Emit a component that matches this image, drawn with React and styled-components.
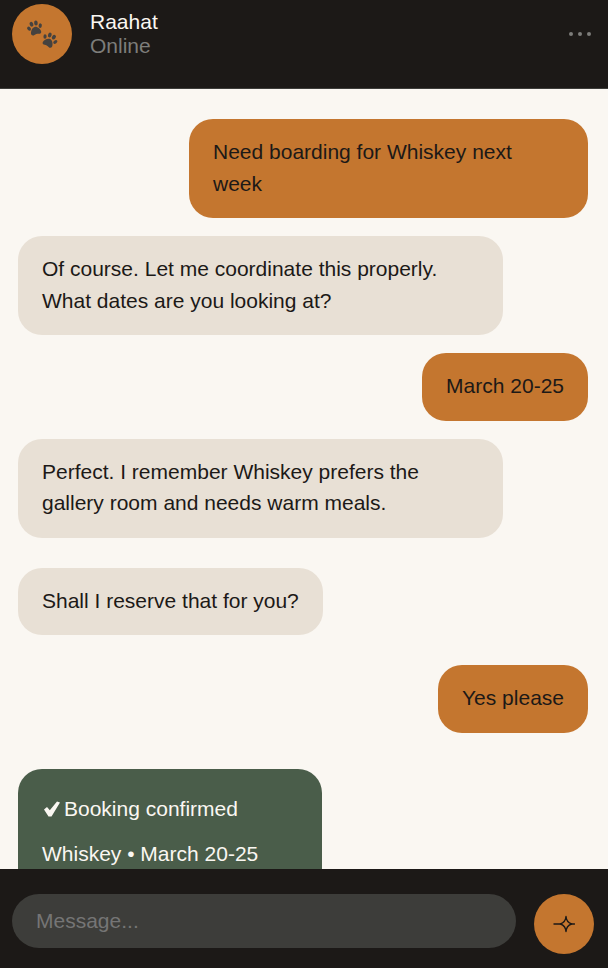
import React from 'react'
import styled, { createGlobalStyle } from 'styled-components'

const GlobalStyle = createGlobalStyle`
  html, body {
    margin: 0;
    padding: 0;
    height: 100%;
    overflow: hidden;
    background: #faf7f2;
    font-family: "Liberation Sans", Arial, sans-serif;
  }
  * { box-sizing: border-box; }
`

const messages = [
  { id: 1, from: 'user', text: 'Need boarding for Whiskey next week', gap: 0 },
  { id: 2, from: 'ai', text: 'Of course. Let me coordinate this properly. What dates are you looking at?', gap: 18 },
  { id: 3, from: 'user', text: 'March 20-25', gap: 18 },
  { id: 4, from: 'ai', text: 'Perfect. I remember Whiskey prefers the gallery room and needs warm meals.', gap: 18 },
  { id: 5, from: 'ai', text: 'Shall I reserve that for you?', gap: 30 },
  { id: 6, from: 'user', text: 'Yes please', gap: 30 },
]

function Paw({ x, y, rotate }) {
  return (
    <g transform={`translate(${x} ${y}) rotate(${rotate})`} fill="#45423f">
      <ellipse cx="-5.8" cy="-1.4" rx="1.6" ry="2.3" transform="rotate(-25 -5.8 -1.4)" />
      <ellipse cx="-2.3" cy="-5" rx="1.8" ry="2.5" transform="rotate(-8 -2.3 -5)" />
      <ellipse cx="2.3" cy="-5" rx="1.8" ry="2.5" transform="rotate(8 2.3 -5)" />
      <ellipse cx="5.8" cy="-1.4" rx="1.6" ry="2.3" transform="rotate(25 5.8 -1.4)" />
      <path d="M0 -1.6C2.8 -1.6 5.2 2.2 5.2 4.4C5.2 6.2 3.5 6.600 2.2 6.100C1 5.700 -1 5.700 -2.2 6.100C-3.500 6.600 -5.200 6.200 -5.200 4.400C-5.200 2.200 -2.800 -1.600 0 -1.600Z" />
    </g>
  )
}

export default function App() {
  return (
    <>
      <GlobalStyle />
      <Screen>
        <Header>
          <Avatar>
            <svg width="40" height="40" viewBox="0 0 40 40">
              <Paw x={13} y={14.5} rotate={-15} />
              <Paw x={27.5} y={26.5} rotate={28} />
            </svg>
          </Avatar>
          <Identity>
            <Name>Raahat</Name>
            <Status>Online</Status>
          </Identity>
          <MoreDots>
            <Dot />
            <Dot />
            <Dot />
          </MoreDots>
        </Header>
        <Messages>
          {messages.map((m) => (
            <Bubble key={m.id} $from={m.from} $gap={m.gap}>
              {m.text}
            </Bubble>
          ))}
          <Confirmation>
            <ConfirmTitle>
              <svg width="16" height="16" viewBox="0 0 16 16" fill="#faf7f2">
                <path d="M0 8.500L3 6L5.800 9.200L13 0.500L16 1.500L7.500 15.500L4.500 15.500Z" />
              </svg>
              Booking confirmed
            </ConfirmTitle>
            <ConfirmLine>Whiskey • March 20-25</ConfirmLine>
          </Confirmation>
        </Messages>
        <Composer>
          <MessageInput placeholder="Message..." />
          <SendButton aria-label="Send">
            <svg width="22" height="22" viewBox="0 0 22 22" fill="none" stroke="#1c1917" strokeWidth="1.4" strokeLinejoin="round" strokeLinecap="round">
              <path d="M13 3.500C13.300 7.500 14.500 9.500 18.500 11C14.500 12.500 13.300 14.500 13 18.500C12.700 14.500 11.500 12.500 7.500 11C11.500 9.500 12.700 7.500 13 3.500Z" />
              <path d="M1 11H7.500M18.500 11H21.500" />
            </svg>
          </SendButton>
        </Composer>
      </Screen>
    </>
  )
}

const Screen = styled.div`
  height: 968px;
  display: flex;
  flex-direction: column;
  overflow: hidden;
  background: #faf7f2;
`
const Header = styled.header`
  flex: none;
  height: 89px;
  padding: 4px 17px 0 12px;
  display: flex;
  align-items: flex-start;
  background: #1c1917;
  border-bottom: 1px solid #3d3d3a;
`
const Avatar = styled.div`
  width: 60px;
  height: 60px;
  border-radius: 50%;
  background: #c4762f;
  display: flex;
  align-items: center;
  justify-content: center;
`
const Identity = styled.div`
  margin-left: 18px;
  padding-top: 6px;
  flex: 1;
`
const Name = styled.div`
  font-size: 21px;
  line-height: 24px;
  color: #faf7f2;
`
const Status = styled.div`
  font-size: 21px;
  line-height: 24px;
  color: #7d7d7a;
`
const MoreDots = styled.div`
  display: flex;
  gap: 5px;
  margin-top: 28px;
`
const Dot = styled.span`
  width: 4px;
  height: 4px;
  border-radius: 50%;
  background: #7d7d7a;
`
const Messages = styled.main`
  flex: 1;
  min-height: 0;
  overflow: hidden;
  padding: 30px 20px 0 18px;
  display: flex;
  flex-direction: column;
  align-items: flex-start;
`
const Bubble = styled.div`
  flex: none;
  max-width: ${(p) => (p.$from === 'user' ? '399px' : '485px')};
  margin-top: ${(p) => p.$gap}px;
  align-self: ${(p) => (p.$from === 'user' ? 'flex-end' : 'flex-start')};
  padding: 17px 24px 19px;
  border-radius: 24px;
  font-size: 21px;
  line-height: 31.5px;
  color: #1c1917;
  background: ${(p) => (p.$from === 'user' ? '#c4762f' : '#e8e0d5')};
`
const Confirmation = styled.div`
  flex: none;
  width: 304px;
  margin-top: 36px;
  padding: 24px;
  border-radius: 24px;
  background: #4a5d4a;
  color: #faf7f2;
`
const ConfirmTitle = styled.div`
  display: flex;
  align-items: center;
  gap: 4px;
  padding-left: 2px;
  font-size: 21px;
  line-height: 32px;
  margin-bottom: 13px;
`
const ConfirmLine = styled.div`
  font-size: 21px;
  line-height: 32px;
`
const Composer = styled.footer`
  flex: none;
  height: 99px;
  padding: 25px 14px 0 12px;
  display: flex;
  align-items: flex-start;
  gap: 18px;
  background: #1c1917;
`
const MessageInput = styled.input`
  flex: 1;
  min-width: 0;
  height: 54px;
  padding: 0 24px;
  border: none;
  outline: none;
  border-radius: 27px;
  background: #3d3d3a;
  color: #faf7f2;
  font-family: "Liberation Sans", Arial, sans-serif;
  font-size: 21px;
  &::placeholder {
    color: #757575;
  }
`
const SendButton = styled.button`
  flex: none;
  width: 60px;
  height: 60px;
  padding: 0;
  border: none;
  border-radius: 50%;
  background: #c4762f;
  display: flex;
  align-items: center;
  justify-content: center;
`
